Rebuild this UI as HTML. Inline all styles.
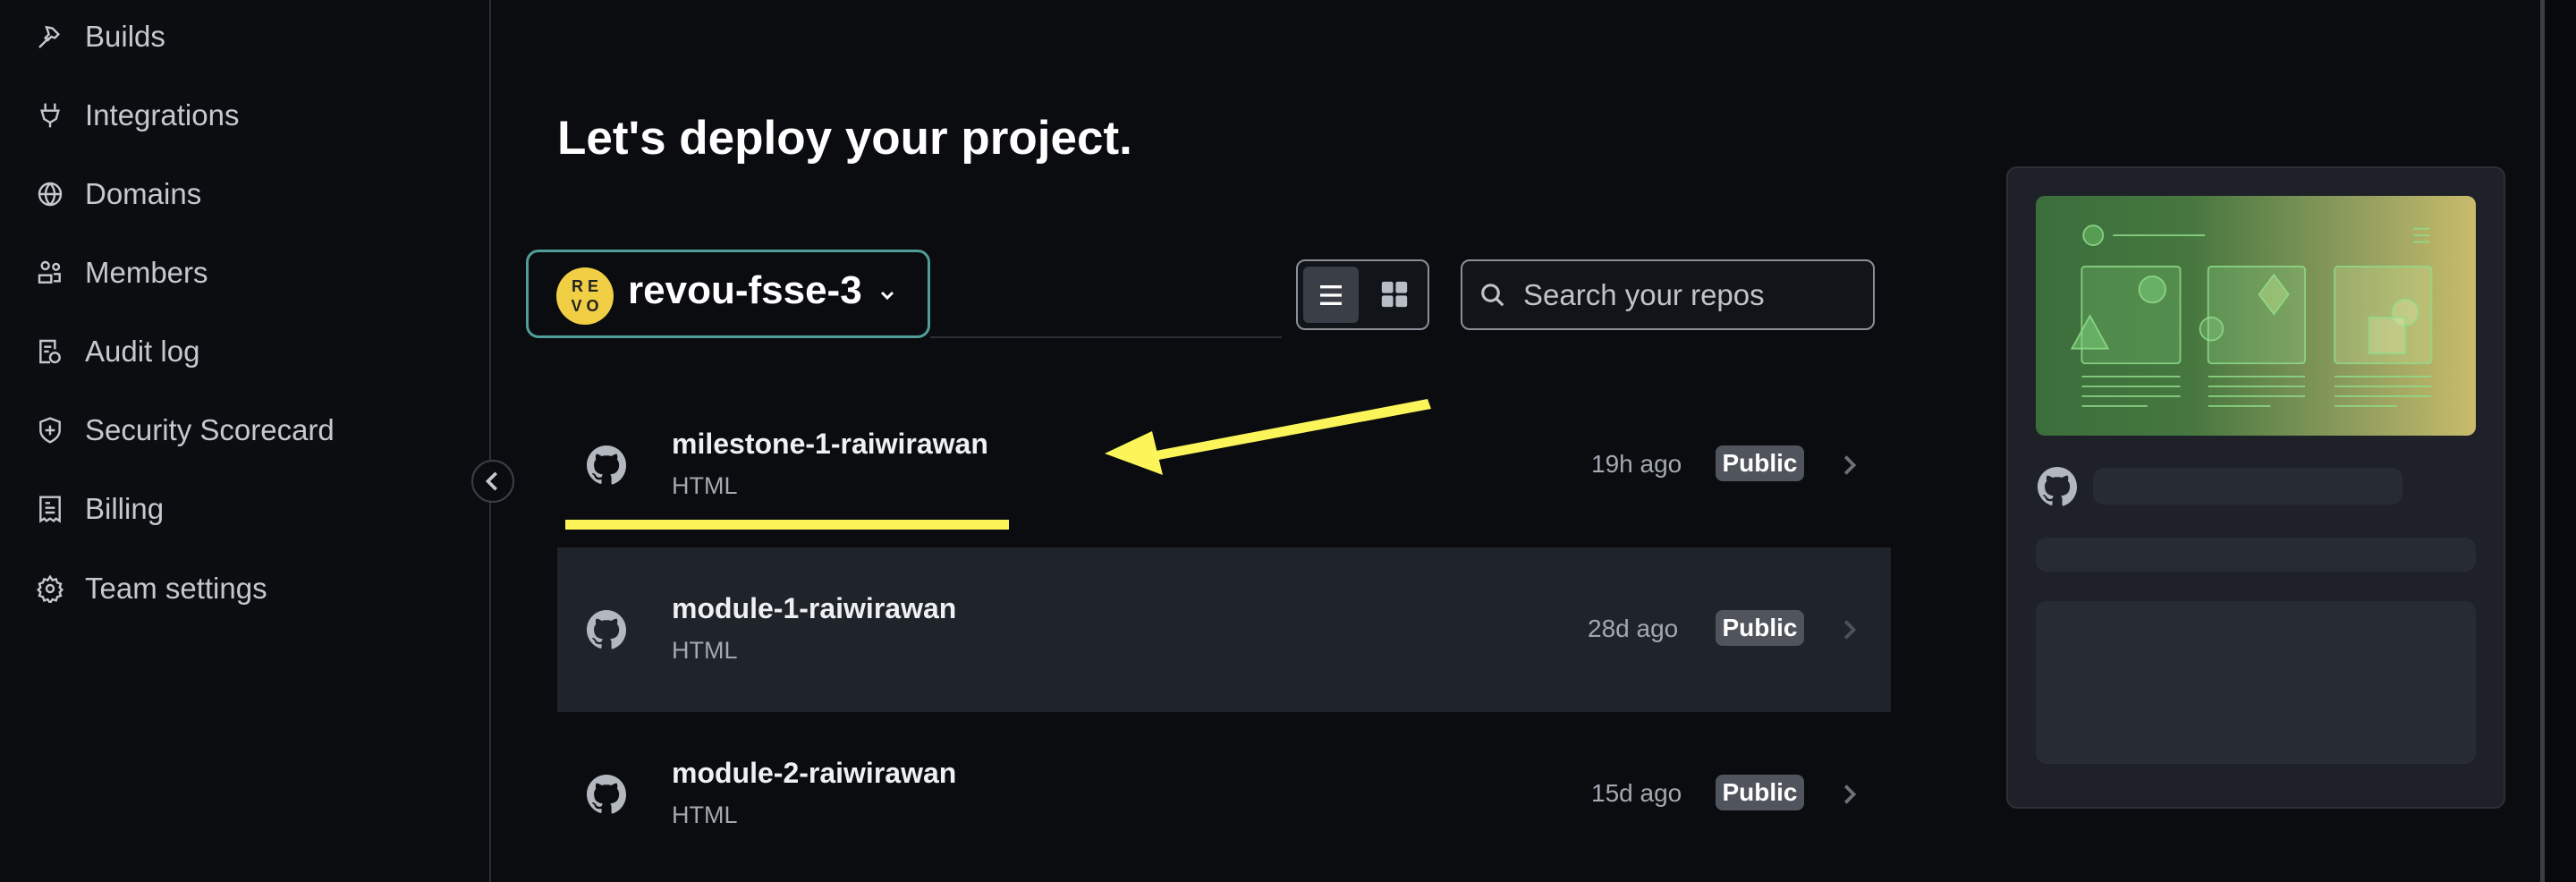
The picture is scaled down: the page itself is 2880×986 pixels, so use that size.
<!DOCTYPE html>
<html><head><meta charset="utf-8"><style>
*{box-sizing:border-box;margin:0;padding:0}
body{width:2880px;height:986px;background:#0a0c10;font-family:"Liberation Sans",sans-serif;position:relative;overflow:hidden;color:#e6e8eb}
.a{position:absolute}
.side{left:0;top:0;width:549px;height:986px;border-right:2px solid #2b2f35;background:#0b0d11}
.it{position:absolute;left:0;height:50px;display:flex;align-items:center;font-size:33px;color:#c5c9cf}
.it svg{position:absolute;left:40px;width:32px;height:32px}
.it span{position:absolute;left:95px;white-space:nowrap}
.row{position:absolute;left:623px;width:1491px;height:184px}
.gh{position:absolute;left:656px;width:44px;height:44px}
.nm{position:absolute;font-size:32px;font-weight:bold;color:#eef0f3}
.ln{position:absolute;font-size:27px;color:#a3a9b1}
.tm{position:absolute;font-size:28px;color:#a3a9b1}
.pb{position:absolute;width:99px;height:40px;border-radius:8px;background:#50555d;color:#fff;font-weight:bold;font-size:28px;text-align:center;line-height:40px}
</style></head><body>
<div class="a side">
<div class="it" style="top:16px"><svg viewBox="0 0 24 24" fill="none" stroke="#c5c9cf" stroke-width="1.8"><path d="M3 21l8-8M9 4l5 1 5 5-3 3-3-1-3 3-2-2 3-3-1-3z"/></svg><span>Builds</span></div>
<div class="it" style="top:104px"><svg viewBox="0 0 24 24" fill="none" stroke="#c5c9cf" stroke-width="1.8"><path d="M8 2v5M16 2v5M5 8h14l-2 7-5 3-5-3zM12 18v4"/></svg><span>Integrations</span></div>
<div class="it" style="top:192px"><svg viewBox="0 0 24 24" fill="none" stroke="#c5c9cf" stroke-width="1.8"><circle cx="12" cy="12" r="9"/><path d="M3 12h18M12 3c-5 5-5 13 0 18M12 3c5 5 5 13 0 18"/></svg><span>Domains</span></div>
<div class="it" style="top:280px"><svg viewBox="0 0 24 24" fill="none" stroke="#c5c9cf" stroke-width="1.8"><circle cx="8" cy="6" r="3"/><circle cx="17" cy="7" r="2.5"/><path d="M3 20v-6h10v6zM15 13h5v6h-5"/></svg><span>Members</span></div>
<div class="it" style="top:368px"><svg viewBox="0 0 24 24" fill="none" stroke="#c5c9cf" stroke-width="1.8"><path d="M12 21H4V3h12v7M7 8h6M7 12h4"/><circle cx="16" cy="17" r="4"/></svg><span>Audit log</span></div>
<div class="it" style="top:456px"><svg viewBox="0 0 24 24" fill="none" stroke="#c5c9cf" stroke-width="1.8"><path d="M12 2l8 3v7c0 5-4 8-8 10-4-2-8-5-8-10V5z M12 8v8M8 12h8"/></svg><span>Security Scorecard</span></div>
<div class="it" style="top:544px"><svg viewBox="0 0 24 24" fill="none" stroke="#c5c9cf" stroke-width="1.8"><path d="M4 2h16v20l-3-2-2 2-3-2-3 2-2-2-3 2zM8 7h4M8 11h8M8 15h8"/></svg><span>Billing</span></div>
<div class="it" style="top:633px"><svg viewBox="0 0 24 24" fill="none" stroke="#c5c9cf" stroke-width="1.8"><circle cx="12" cy="12" r="3"/><path d="M12 2l2 3 3-1 1 3 3 1-1 3 2 2-2 2 1 3-3 1-1 3-3-1-2 3-2-3-3 1-1-3-3-1 1-3-2-2 2-2-1-3 3-1 1-3 3 1z"/></svg><span>Team settings</span></div>
</div>
<div class="a" style="left:527px;top:514px;width:48px;height:48px;border-radius:50%;border:2px solid #3a3f46;background:#0a0c10"><svg viewBox="0 0 24 24" style="width:44px;height:44px" fill="none" stroke="#c5c9cf" stroke-width="2"><path d="M14 7l-5 5 5 5"/></svg></div>

<div class="a" style="left:623px;top:124px;font-size:53px;font-weight:bold;color:#fff">Let's deploy your project.</div>

<div class="a" style="left:1040px;top:376px;width:393px;height:2px;background:#2a2f36"></div>
<div class="a" style="left:588px;top:279px;width:452px;height:99px;border:3px solid #4f9e97;border-radius:14px"></div>
<div class="a" style="left:622px;top:299px;width:64px;height:64px;border-radius:50%;background:#f0cf45;color:#222;font-size:18px;font-weight:bold;text-align:center;line-height:22px;padding-top:10px">R E<br>V O</div>
<div class="a" style="left:702px;top:300px;font-size:44px;font-weight:bold;color:#fff">revou-fsse-3</div>
<svg class="a" style="left:980px;top:318px;width:24px;height:24px" viewBox="0 0 24 24" fill="none" stroke="#fff" stroke-width="3"><path d="M6 9l6 6 6-6"/></svg>

<div class="a" style="left:1449px;top:290px;width:149px;height:79px;border:2px solid #8a9098;border-radius:10px;background:#111418"></div>
<div class="a" style="left:1457px;top:298px;width:62px;height:63px;border-radius:6px;background:#3a3f47"></div>
<svg class="a" style="left:1472px;top:314px;width:32px;height:32px" viewBox="0 0 24 24" stroke="#fff" stroke-width="2.5"><path d="M3 5h18M3 12h18M3 19h18"/></svg>
<svg class="a" style="left:1542px;top:312px;width:34px;height:34px" viewBox="0 0 24 24" fill="#b8bec6"><rect x="2" y="2" width="9" height="9" rx="1.5"/><rect x="13" y="2" width="9" height="9" rx="1.5"/><rect x="2" y="13" width="9" height="9" rx="1.5"/><rect x="13" y="13" width="9" height="9" rx="1.5"/></svg>

<div class="a" style="left:1633px;top:290px;width:463px;height:79px;border:2px solid #8a9098;border-radius:10px;background:#111418"></div>
<svg class="a" style="left:1654px;top:315px;width:30px;height:30px" viewBox="0 0 24 24" fill="none" stroke="#c0c4ca" stroke-width="2.5"><circle cx="10" cy="10" r="7"/><path d="M15 15l6 6"/></svg>
<div class="a" style="left:1703px;top:311px;font-size:33px;color:#c0c4ca">Search your repos</div>

<div class="row" style="top:428px"></div>
<div class="row" style="top:612px;background:#1f232a"></div>
<div class="row" style="top:795px"></div>

<svg width="0" height="0" style="position:absolute"><defs><symbol id="g" viewBox="0 0 16 16"><path fill="#b3b8bf" d="M8 0C3.58 0 0 3.580 0 8c0 3.54 2.29 6.53 5.47 7.59.4.07.55-.17.55-.38v-1.4C3.8 14.3 3.35 13 3.35 13c-.36-.92-.89-1.170-.89-1.17-.73-.5.05-.49.05-.49.8.06 1.23.83 1.23.83.71 1.22 1.870.87 2.33.66.07-.52.28-.87.51-1.07-1.78-.2-3.64-.89-3.64-3.95 0-.87.31-1.59.82-2.15-.08-.2-.36-1.02.08-2.12 0 0 .67-.21 2.2.82.64-.18 1.32-.27 2-.27.68 0 1.36.09 2 .27 1.53-1.04 2.2-.82 2.2-.82.44 1.1.16 1.92.08 2.12.51.56.82 1.27.82 2.15 0 3.07-1.87 3.75-3.65 3.95.29.25.54.73.54 1.48v2.2c0 .21.15.46.55.38A8.013 8.013 0 0016 8c0-4.42-3.58-8-8-8z"/></symbol></defs></svg>

<svg class="gh" style="top:498px"><use href="#g"/></svg>
<div class="a nm" style="left:751px;top:478px">milestone-1-raiwirawan</div>
<div class="a ln" style="left:751px;top:528px">HTML</div>
<div class="a tm" style="left:1779px;top:503px">19h ago</div>
<div class="a pb" style="left:1918px;top:498px">Public</div>
<svg class="a" style="left:2057px;top:505px;width:20px;height:30px" viewBox="0 0 10 16" fill="none" stroke="#6b7079" stroke-width="2"><path d="M3 3l5 5-5 5"/></svg>

<svg class="gh" style="top:682px"><use href="#g"/></svg>
<div class="a nm" style="left:751px;top:662px">module-1-raiwirawan</div>
<div class="a ln" style="left:751px;top:712px">HTML</div>
<div class="a tm" style="left:1775px;top:687px">28d ago</div>
<div class="a pb" style="left:1918px;top:682px">Public</div>
<svg class="a" style="left:2057px;top:689px;width:20px;height:30px" viewBox="0 0 10 16" fill="none" stroke="#4d525a" stroke-width="2"><path d="M3 3l5 5-5 5"/></svg>

<svg class="gh" style="top:866px"><use href="#g"/></svg>
<div class="a nm" style="left:751px;top:846px">module-2-raiwirawan</div>
<div class="a ln" style="left:751px;top:896px">HTML</div>
<div class="a tm" style="left:1779px;top:871px">15d ago</div>
<div class="a pb" style="left:1918px;top:866px">Public</div>
<svg class="a" style="left:2057px;top:873px;width:20px;height:30px" viewBox="0 0 10 16" fill="none" stroke="#6b7079" stroke-width="2"><path d="M3 3l5 5-5 5"/></svg>

<svg class="a" style="left:0;top:0" width="2880" height="986"><g fill="#fbf55a" stroke="none">
<rect x="632" y="581" width="496" height="11"/>
<polygon points="1596,446 1600,457 1290,515 1287,505"/>
<polygon points="1235,507 1288,482 1300,531"/></g></svg>

<div class="a" style="left:2243px;top:186px;width:558px;height:718px;background:#1e2228;border:2px solid #2b3037;border-radius:12px"></div>
<div class="a" style="left:2276px;top:219px;width:492px;height:268px;border-radius:10px;background:linear-gradient(90deg,#3b6e3c 0%,#46773f 35%,#8a9a5c 70%,#c9bc6c 100%);overflow:hidden">
<svg width="492" height="268" viewBox="0 0 268 146" preserveAspectRatio="none" fill="none" stroke="#8fdc8a" stroke-width="1" stroke-opacity="0.85">
<circle cx="35" cy="24" r="6" fill="#6ec86a" fill-opacity=".5"/><path d="M47 24h56"/><path d="M230 20h10M230 24h10M230 28h10"/>
<rect x="28" y="43" width="60" height="59" rx="2" fill="#7ed47a" fill-opacity=".25"/><circle cx="71" cy="57" r="8" fill="#7ed47a" fill-opacity=".5"/><path d="M22 93l11-20 11 20z" fill="#7ed47a" fill-opacity=".5"/>
<rect x="105" y="43" width="59" height="59" rx="2" fill="#8fdc8a" fill-opacity=".25"/><path d="M145 48l9 12-9 12-9-12z" fill="#b8e08a" fill-opacity=".5"/><circle cx="107" cy="81" r="7" fill="#8fdc8a" fill-opacity=".3"/>
<rect x="182" y="43" width="59" height="59" rx="2" fill="#d8f0a0" fill-opacity=".25"/><circle cx="225" cy="71" r="8" fill="#e8f0b0" fill-opacity=".3"/><rect x="203" y="74" width="22" height="22" fill="#e8f0b0" fill-opacity=".3"/>
<path d="M28 110h60M28 116h60M28 122h60M28 128h40M105 110h59M105 116h59M105 122h59M105 128h38M182 110h59M182 116h59M182 122h59M182 128h38"/></svg></div>
<svg class="a" style="left:2278px;top:522px;width:44px;height:44px"><use href="#g"/></svg>
<div class="a" style="left:2340px;top:523px;width:346px;height:41px;border-radius:12px;background:#272c33"></div>
<div class="a" style="left:2276px;top:601px;width:492px;height:38px;border-radius:12px;background:#272c33"></div>
<div class="a" style="left:2276px;top:672px;width:492px;height:182px;border-radius:12px;background:#272c33"></div>
<div class="a" style="left:2840px;top:0;width:5px;height:986px;background:#3a3e44"></div>
<div class="a" style="left:2845px;top:0;width:35px;height:986px;background:#07090c"></div>
</body></html>
